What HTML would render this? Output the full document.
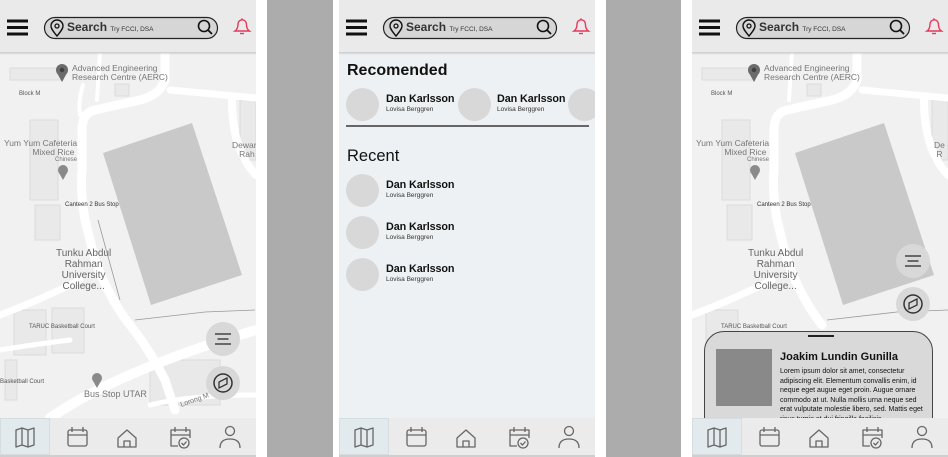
<!DOCTYPE html>
<html><head><meta charset="utf-8"><style>
*{margin:0;padding:0;box-sizing:border-box}
body{width:948px;height:457px;background:#fff;position:relative;overflow:hidden;font-family:"Liberation Sans",Arial,sans-serif}
.gap{position:absolute;top:0;height:457px;background:#acacac}
.scr{position:absolute;top:0;width:256px;height:457px;overflow:hidden;background:#f1f1f1}
.nav{position:absolute;left:0;top:418px;width:256px;height:39px;background:#ebebeb;z-index:5;border-bottom:2px solid #cfcfcf}
.nav .sel{position:absolute;left:0;top:0;width:50px;height:37px;background:#e2eaed;border:1px solid #d5dde0}
.abs{position:absolute}
.btn{position:absolute;width:34px;height:34px;border-radius:50%;background:#d8d8d8;z-index:4}
.t{position:absolute;color:#777;font-size:8px;white-space:nowrap}
.nm{position:absolute;font-weight:bold;font-size:10.8px;color:#111;letter-spacing:-0.1px}
.sb{position:absolute;font-size:6.5px;color:#333}
.cir{position:absolute;width:33px;height:33px;border-radius:50%;background:#d8d8d8}
.srch{position:absolute;top:20px;z-index:7;font-size:12px;font-weight:bold;color:#333}
.srch span{font-size:6.5px;font-weight:normal}
</style></head><body>

<div class="gap" style="left:267px;width:66px"></div>
<div class="gap" style="left:606px;width:75px"></div>

<!-- Screen 1 -->
<div class="scr" style="left:0">
 <svg class="abs" style="left:0;top:0" width="256" height="457">
  <rect width="256" height="457" fill="#f1f1f1"/>
  <g fill="#e9e9e9" stroke="#dcdcdc" stroke-width="1">
   <rect x="10" y="68" width="53" height="12"/><rect x="115" y="84" width="14" height="12"/>
   <rect x="30" y="120" width="28" height="80"/><rect x="35" y="205" width="25" height="35"/>
   <rect x="14" y="310" width="32" height="45"/><rect x="52" y="308" width="32" height="45"/>
   <rect x="5" y="360" width="12" height="40"/><rect x="150" y="360" width="70" height="45"/>
   <rect x="240" y="100" width="16" height="60"/>
  </g>
  <g fill="none" stroke="#fff" stroke-linecap="round">
   <path d="M165 52 L165 80 Q160 95 140 100 L95 110 Q82 113 82 130 L82 170 Q80 190 85 220 L95 260 Q110 300 130 325 Q150 350 165 380 L175 410" stroke-width="9"/>
   <path d="M0 315 Q40 300 80 280" stroke-width="7"/>
   <path d="M170 90 L256 98" stroke-width="7"/>
   <path d="M232 100 Q232 150 256 175" stroke-width="8"/>
   <path d="M50 418 Q120 370 256 330" stroke-width="10"/>
   <path d="M0 350 Q30 345 70 340" stroke-width="5"/>
   <path d="M150 405 Q190 395 256 395" stroke-width="5"/>
   <path d="M100 52 L97 100" stroke-width="4"/>
   <path d="M83 85 Q78 100 80 115" stroke-width="4"/>
  </g>
  <polygon points="103,153 192,123 242,275 151,305" fill="#c9c9c9"/>
  <path d="M135 320 L205 312 L255 310" fill="none" stroke="#999" stroke-width="0.8"/>
  <path d="M98 220 L120 300" fill="none" stroke="#999" stroke-width="0.8"/>
  <circle cx="62" cy="70" r="6" fill="#6b6b6b"/><path d="M56.5 72 L62 82 L67.5 72Z" fill="#6b6b6b"/><circle cx="62" cy="70" r="2.2" fill="#3f3f3f"/>
  <circle cx="63" cy="170" r="5" fill="#8a8a8a"/><path d="M58.5 172 L63 180 L67.5 172Z" fill="#8a8a8a"/>
  <circle cx="97" cy="378" r="5" fill="#8a8a8a"/><path d="M92.5 380 L97 388 L101.5 380Z" fill="#8a8a8a"/>
 </svg>
 <div class="t" style="left:72px;top:64px;font-size:8.5px;line-height:9px">Advanced Engineering<br>Research Centre (AERC)</div>
 <div class="t" style="left:19px;top:91px;font-size:6px;color:#555">Block M</div>
 <div class="t" style="left:4px;top:139px;font-size:8.5px;line-height:9px">Yum Yum Cafeteria<br>&nbsp;&nbsp;&nbsp;&nbsp;&nbsp;&nbsp;&nbsp;&nbsp;&nbsp;&nbsp;&nbsp;&nbsp;Mixed Rice</div>
 <div class="t" style="left:55px;top:157px;font-size:6px">Chinese</div>
 <div class="t" style="left:232px;top:141px;font-size:8.5px;line-height:9px">Dewan<br>&nbsp;&nbsp;&nbsp;Rah</div>
 <div class="t" style="left:65px;top:202px;font-size:6px;color:#333">Canteen 2 Bus Stop</div>
 <div class="t" style="left:56px;top:248px;font-size:10px;line-height:11px;text-align:center;color:#666">Tunku Abdul<br>Rahman<br>University<br>College...</div>
 <div class="t" style="left:29px;top:324px;font-size:6px;color:#555">TARUC Basketball Court</div>
 <div class="t" style="left:0;top:379px;font-size:6px;color:#555">Basketball Court</div>
 <div class="t" style="left:84px;top:389px;font-size:9px">Bus Stop UTAR</div>
 <div class="t" style="left:180px;top:397px;font-size:7px;transform:rotate(-20deg)">Lorong M</div>
 <div class="btn" style="left:206px;top:322px"><svg width="34" height="34"><path d="M9 12h16M11.5 17h11M9 22h16" stroke="#444" stroke-width="1.6"/></svg></div>
 <div class="btn" style="left:206px;top:366px"><svg width="34" height="34"><circle cx="17" cy="17" r="9" fill="none" stroke="#333" stroke-width="1.5"/><path d="M21 12 L13 16 L13 22 L21 18Z" fill="none" stroke="#333" stroke-width="1.3"/></svg></div>
</div>

<!-- Screen 2 -->
<div class="scr" style="left:339px;background:#edf1f3">
 <div style="position:absolute;left:8px;top:62px;font-weight:bold;font-size:16px;color:#111">Recomended</div>
 <div class="cir" style="left:7px;top:88px"></div><div class="nm" style="left:47px;top:93px">Dan Karlsson</div><div class="sb" style="left:47px;top:106px">Lovisa Berggren</div>
 <div class="cir" style="left:119px;top:88px"></div><div class="nm" style="left:158px;top:93px">Dan Karlsson</div><div class="sb" style="left:158px;top:106px">Lovisa Berggren</div>
 <div class="cir" style="left:229px;top:88px"></div>
 <div style="position:absolute;left:7px;top:125px;width:243px;height:2px;background:#666"></div>
 <div style="position:absolute;left:8px;top:147px;font-size:16.5px;color:#111">Recent</div>
 <div class="cir" style="left:7px;top:174px"></div><div class="nm" style="left:47px;top:179px">Dan Karlsson</div><div class="sb" style="left:47px;top:192px">Lovisa Berggren</div>
 <div class="cir" style="left:7px;top:216px"></div><div class="nm" style="left:47px;top:221px">Dan Karlsson</div><div class="sb" style="left:47px;top:234px">Lovisa Berggren</div>
 <div class="cir" style="left:7px;top:258px"></div><div class="nm" style="left:47px;top:263px">Dan Karlsson</div><div class="sb" style="left:47px;top:276px">Lovisa Berggren</div>
</div>

<!-- Screen 3 -->
<div class="scr" style="left:692px">
 <svg class="abs" style="left:0;top:0" width="256" height="457">
  <rect width="256" height="457" fill="#f1f1f1"/>
  <g fill="#e9e9e9" stroke="#dcdcdc" stroke-width="1">
   <rect x="10" y="68" width="53" height="12"/><rect x="115" y="84" width="14" height="12"/>
   <rect x="30" y="120" width="28" height="80"/><rect x="35" y="205" width="25" height="35"/>
   <rect x="14" y="310" width="32" height="45"/><rect x="240" y="100" width="16" height="60"/>
  </g>
  <g fill="none" stroke="#fff" stroke-linecap="round">
   <path d="M165 52 L165 80 Q160 95 140 100 L95 110 Q82 113 82 130 L82 170 Q80 190 85 220 L95 260 Q110 300 130 325" stroke-width="9"/>
   <path d="M0 315 Q40 300 80 280" stroke-width="7"/>
   <path d="M170 90 L256 98" stroke-width="7"/>
   <path d="M232 100 Q232 150 256 175" stroke-width="8"/>
   <path d="M100 52 L97 100" stroke-width="4"/>
  </g>
  <polygon points="103,153 192,123 242,275 151,305" fill="#c9c9c9"/>
  <path d="M135 320 L205 312 L256 310" fill="none" stroke="#999" stroke-width="0.8"/>
  <circle cx="62" cy="70" r="6" fill="#6b6b6b"/><path d="M56.5 72 L62 82 L67.5 72Z" fill="#6b6b6b"/><circle cx="62" cy="70" r="2.2" fill="#3f3f3f"/>
  <circle cx="63" cy="170" r="5" fill="#8a8a8a"/><path d="M58.5 172 L63 180 L67.5 172Z" fill="#8a8a8a"/>
 </svg>
 <div class="t" style="left:72px;top:64px;font-size:8.5px;line-height:9px">Advanced Engineering<br>Research Centre (AERC)</div>
 <div class="t" style="left:19px;top:91px;font-size:6px;color:#555">Block M</div>
 <div class="t" style="left:4px;top:139px;font-size:8.5px;line-height:9px">Yum Yum Cafeteria<br>&nbsp;&nbsp;&nbsp;&nbsp;&nbsp;&nbsp;&nbsp;&nbsp;&nbsp;&nbsp;&nbsp;&nbsp;Mixed Rice</div>
 <div class="t" style="left:55px;top:157px;font-size:6px">Chinese</div>
 <div class="t" style="left:242px;top:141px;font-size:8.5px;line-height:9px">De<br>&nbsp;R</div>
 <div class="t" style="left:65px;top:202px;font-size:6px;color:#333">Canteen 2 Bus Stop</div>
 <div class="t" style="left:56px;top:248px;font-size:10px;line-height:11px;text-align:center;color:#666">Tunku Abdul<br>Rahman<br>University<br>College...</div>
 <div class="t" style="left:29px;top:324px;font-size:6px;color:#555">TARUC Basketball Court</div>
 <div class="btn" style="left:204px;top:244px"><svg width="34" height="34"><path d="M9 12h16M11.5 17h11M9 22h16" stroke="#444" stroke-width="1.6"/></svg></div>
 <div class="btn" style="left:204px;top:287px"><svg width="34" height="34"><circle cx="17" cy="17" r="9" fill="none" stroke="#333" stroke-width="1.5"/><path d="M21 12 L13 16 L13 22 L21 18Z" fill="none" stroke="#333" stroke-width="1.3"/></svg></div>
 <div style="position:absolute;left:12px;top:331px;width:229px;height:110px;background:#d9d9d9;border:1.5px solid #444;border-radius:20px 20px 0 0;z-index:4">
  <div style="position:absolute;left:103px;top:3px;width:26px;height:2px;background:#222"></div>
  <div style="position:absolute;left:11px;top:17px;width:56px;height:57px;background:#898989"></div>
  <div style="position:absolute;left:75px;top:19px;font-weight:bold;font-size:11px;color:#111">Joakim Lundin Gunilla</div>
  <div style="position:absolute;left:75px;top:35px;width:150px;font-size:7px;line-height:9.5px;color:#111">Lorem ipsum dolor sit amet, consectetur adipiscing elit. Elementum convallis enim, id neque eget augue eget proin. Augue ornare commodo at ut. Nulla mollis urna neque sed erat vulputate molestie libero, sed. Mattis eget risus turpis at dui fringilla facilisis.</div>
 </div>
</div>

<svg width="0" height="0" style="position:absolute"><defs>
<g id="hd">
 <rect width="256" height="52" fill="#eaeaea"/>
 <path d="M7 21h21M7 27.5h21M7 34h21" stroke="#111" stroke-width="3"/>
 <rect x="44.5" y="17.5" width="173" height="21" rx="10.5" fill="#d6d6d6" stroke="#222" stroke-width="1.2"/>
 <path d="M57 36 C52 30 51 28 51 26 a6 6 0 0 1 12 0 c0 2 -1 4 -6 10Z" fill="none" stroke="#111" stroke-width="1.4"/>
 <circle cx="57" cy="26" r="2" fill="none" stroke="#111" stroke-width="1.3"/>
 <circle cx="204" cy="26" r="5.5" fill="none" stroke="#111" stroke-width="1.6"/><path d="M208 30l4 4" stroke="#111" stroke-width="1.8"/>
 <path d="M235 31 q3-2 3-7 a4.2 4.2 0 0 1 8.4 0 q0 5 3 7Z" fill="none" stroke="#e8375a" stroke-width="1.4"/>
 <path d="M240 33.5 h4" stroke="#e8375a" stroke-width="1.4"/><circle cx="242" cy="19" r="0.8" fill="#e8375a"/>
</g>
<g id="nv" fill="none" stroke="#666" stroke-width="1.3" stroke-linejoin="round">
 <path d="M16 12 l6-2 6 2 6-2 v17 l-6 2 -6-2 -6 2Z M22 10 v17 M28 12 v17"/>
 <rect x="68" y="12" width="19" height="16" rx="2"/><path d="M68 17h19M72 9v5M83 9v5"/>
 <path d="M118 20 l9-8 9 8 v9 h-18Z M124 29 v-6 h6 v6"/>
 <path d="M178 28 h-7 v-16 h19 v8 M171 17h19 M175 9v5 M186 9v5"/><circle cx="184" cy="25" r="5"/><path d="M181.5 25 l2 2 3-3.5"/>
 <circle cx="230" cy="13" r="4.5"/><path d="M220 30 q0-9 10-9 q10 0 10 9"/>
</g></defs></svg>

<svg style="position:absolute;left:0;top:0;z-index:6" width="256" height="54"><use href="#hd"/></svg>
<svg style="position:absolute;left:339px;top:0;z-index:6" width="256" height="54"><use href="#hd"/></svg>
<svg style="position:absolute;left:692px;top:0;z-index:6" width="256" height="54"><use href="#hd"/></svg>
<div style="position:absolute;left:0;top:52px;width:256px;height:3px;background:linear-gradient(#c8c8c8,rgba(0,0,0,0));z-index:6"></div>
<div style="position:absolute;left:339px;top:52px;width:256px;height:3px;background:linear-gradient(#c8c8c8,rgba(0,0,0,0));z-index:6"></div>
<div style="position:absolute;left:692px;top:52px;width:256px;height:3px;background:linear-gradient(#c8c8c8,rgba(0,0,0,0));z-index:6"></div>

<div class="nav" style="left:0"><div class="sel"></div><svg class="abs" style="left:0;top:0" width="256" height="39"><use href="#nv"/></svg></div>
<div class="nav" style="left:339px"><div class="sel"></div><svg class="abs" style="left:0;top:0" width="256" height="39"><use href="#nv"/></svg></div>
<div class="nav" style="left:692px"><div class="sel"></div><svg class="abs" style="left:0;top:0" width="256" height="39"><use href="#nv"/></svg></div>

<div class="srch" style="left:67px">Search <span>Try FCCI, DSA</span></div>
<div class="srch" style="left:406px">Search <span>Try FCCI, DSA</span></div>
<div class="srch" style="left:759px">Search <span>Try FCCI, DSA</span></div>
</body></html>
